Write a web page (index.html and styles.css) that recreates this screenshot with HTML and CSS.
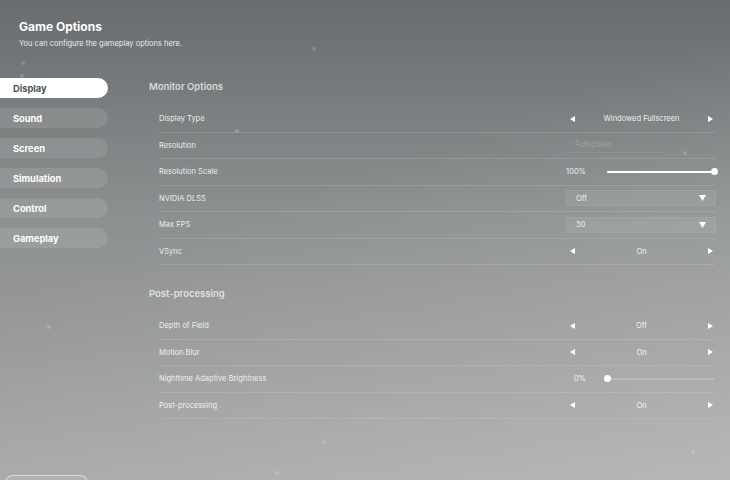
FILE: index.html
```html
<!DOCTYPE html>
<html lang="en">
<head>
    <meta charset="UTF-8">
    <meta name="viewport" content="width=device-width, initial-scale=1.0">
    <title>Game Options</title>
    <link rel="stylesheet" href="styles.css">
</head>
<body>
    <div class="options-screen">
        <!-- Decorative dust particles -->
        <span class="dust" style="left:20px;top:74px"></span>
        <span class="dust" style="left:21px;top:61px"></span>
        <span class="dust" style="left:312px;top:47px"></span>
        <span class="dust" style="left:235px;top:129px"></span>
        <span class="dust" style="left:683px;top:151px"></span>
        <span class="dust" style="left:47px;top:325px"></span>
        <span class="dust" style="left:322px;top:440px"></span>
        <span class="dust" style="left:691px;top:450px"></span>
        <span class="dust" style="left:275px;top:471px"></span>

        <div class="screen-header">
            <h1 class="screen-title">Game Options</h1>
            <p class="screen-subtitle">You can configure the gameplay options here.</p>
        </div>

        <div class="screen-body">
            <nav class="tab-list">
                <button class="tab active">Display</button>
                <button class="tab">Sound</button>
                <button class="tab">Screen</button>
                <button class="tab">Simulation</button>
                <button class="tab">Control</button>
                <button class="tab">Gameplay</button>
            </nav>

            <div class="settings">
                <section class="settings-group">
                    <h2 class="group-title">Monitor Options</h2>
                    <div class="setting-row">
                        <span class="setting-label">Display Type</span>
                        <div class="selector">
                            <svg class="arrow" viewBox="0 0 6 7"><polygon points="6,0 6,7 0,3.5"/></svg>
                            <span class="selector-value">Windowed Fullscreen</span>
                            <svg class="arrow" viewBox="0 0 6 7"><polygon points="0,0 6,3.5 0,7"/></svg>
                        </div>
                    </div>
                    <div class="setting-row">
                        <span class="setting-label">Resolution</span>
                        <div class="dropdown disabled">
                            <span>Fullscreen</span>
                        </div>
                    </div>
                    <div class="setting-row">
                        <span class="setting-label">Resolution Scale</span>
                        <div class="slider">
                            <span class="slider-value">100%</span>
                            <div class="slider-track">
                                <div class="slider-fill" style="width:100%"></div>
                                <div class="slider-knob" style="left:100%"></div>
                            </div>
                        </div>
                    </div>
                    <div class="setting-row">
                        <span class="setting-label">NVIDIA DLSS</span>
                        <div class="dropdown">
                            <span>Off</span>
                            <svg class="caret" viewBox="0 0 7 6"><polygon points="0,0 7,0 3.5,6"/></svg>
                        </div>
                    </div>
                    <div class="setting-row">
                        <span class="setting-label">Max FPS</span>
                        <div class="dropdown">
                            <span>30</span>
                            <svg class="caret" viewBox="0 0 7 6"><polygon points="0,0 7,0 3.5,6"/></svg>
                        </div>
                    </div>
                    <div class="setting-row">
                        <span class="setting-label">VSync</span>
                        <div class="selector">
                            <svg class="arrow" viewBox="0 0 6 7"><polygon points="6,0 6,7 0,3.5"/></svg>
                            <span class="selector-value">On</span>
                            <svg class="arrow" viewBox="0 0 6 7"><polygon points="0,0 6,3.5 0,7"/></svg>
                        </div>
                    </div>
                </section>

                <section class="settings-group">
                    <h2 class="group-title">Post-processing</h2>
                    <div class="setting-row">
                        <span class="setting-label">Depth of Field</span>
                        <div class="selector">
                            <svg class="arrow" viewBox="0 0 6 7"><polygon points="6,0 6,7 0,3.5"/></svg>
                            <span class="selector-value">Off</span>
                            <svg class="arrow" viewBox="0 0 6 7"><polygon points="0,0 6,3.5 0,7"/></svg>
                        </div>
                    </div>
                    <div class="setting-row">
                        <span class="setting-label">Motion Blur</span>
                        <div class="selector">
                            <svg class="arrow" viewBox="0 0 6 7"><polygon points="6,0 6,7 0,3.5"/></svg>
                            <span class="selector-value">On</span>
                            <svg class="arrow" viewBox="0 0 6 7"><polygon points="0,0 6,3.5 0,7"/></svg>
                        </div>
                    </div>
                    <div class="setting-row">
                        <span class="setting-label">Nighttime Adaptive Brightness</span>
                        <div class="slider">
                            <span class="slider-value">0%</span>
                            <div class="slider-track">
                                <div class="slider-fill" style="width:0%"></div>
                                <div class="slider-knob" style="left:0%"></div>
                            </div>
                        </div>
                    </div>
                    <div class="setting-row">
                        <span class="setting-label">Post-processing</span>
                        <div class="selector">
                            <svg class="arrow" viewBox="0 0 6 7"><polygon points="6,0 6,7 0,3.5"/></svg>
                            <span class="selector-value">On</span>
                            <svg class="arrow" viewBox="0 0 6 7"><polygon points="0,0 6,3.5 0,7"/></svg>
                        </div>
                    </div>
                </section>
            </div>
        </div>

        <div class="screen-footer">
            <button class="footer-button"></button>
        </div>
    </div>
</body>
</html>
```

FILE: styles.css
```css
* {
    margin: 0;
    padding: 0;
    box-sizing: border-box;
}

body {
    font-family: 'Inter', 'Open Sans', sans-serif;
    color: white;
    width: 730px;
    height: 480px;
    overflow: hidden;
    background: #8a8c8d;
}

.options-screen {
    position: relative;
    width: 730px;
    height: 480px;
    overflow: hidden;
    background:
        linear-gradient(160deg, rgba(255, 255, 255, 0) 40%, rgba(255, 255, 255, 0.22) 100%),
        linear-gradient(180deg, #686c6e 0%, #8d9091 45%, #a3a3a3 100%);
}

.dust {
    position: absolute;
    width: 4px;
    height: 4px;
    border-radius: 50%;
    background: rgba(255, 255, 255, 0.18);
}

.screen-header {
    padding: 19px 19px 0;
    height: 78px;
}

.screen-title {
    font-size: 12px;
    font-weight: 700;
    line-height: 16px;
}

.screen-subtitle {
    font-size: 7.5px;
    line-height: 12px;
    margin-top: 3px;
    color: rgba(255, 255, 255, 0.9);
}

.screen-body {
    display: flex;
}

.tab-list {
    width: 108px;
    display: flex;
    flex-direction: column;
    gap: 10px;
}

.tab {
    height: 20px;
    border: none;
    border-radius: 0 10px 10px 0;
    background: rgba(255, 255, 255, 0.1);
    color: white;
    font-family: inherit;
    font-size: 9.3px;
    font-weight: 700;
    text-align: left;
    padding-left: 13px;
}

.tab.active {
    background: white;
    color: #4e5254;
}

.settings {
    flex: 1;
    margin-left: 41px;
    margin-right: 14px;
    padding-top: 1px;
    display: flex;
    flex-direction: column;
    gap: 21px;
}

.group-title {
    font-size: 9.5px;
    font-weight: 600;
    line-height: 16px;
    margin-bottom: 11px;
    color: rgba(255, 255, 255, 0.72);
}

.setting-row {
    display: grid;
    grid-template-columns: 1fr 150px;
    align-items: center;
    height: 26.5px;
    margin-left: 10px;
    border-bottom: 1px solid rgba(255, 255, 255, 0.12);
}

.setting-label {
    font-size: 7.5px;
    color: rgba(255, 255, 255, 0.88);
}

.selector {
    display: flex;
    align-items: center;
    justify-content: space-between;
    padding: 0 3px 0 4px;
}

.selector-value {
    font-size: 7.5px;
    color: rgba(255, 255, 255, 0.9);
}

.arrow {
    width: 5px;
    height: 6px;
    fill: white;
}

.dropdown {
    height: 16px;
    display: flex;
    align-items: center;
    justify-content: space-between;
    padding: 0 9px 0 9px;
    background: rgba(255, 255, 255, 0.07);
    border: 1px solid rgba(255, 255, 255, 0.06);
    font-size: 7.5px;
    color: rgba(255, 255, 255, 0.9);
}

.dropdown.disabled {
    width: 96px;
    background: none;
    border: none;
    border-bottom: 1px solid rgba(255, 255, 255, 0.08);
    color: rgba(255, 255, 255, 0.25);
}

.caret {
    width: 7px;
    height: 6px;
    fill: white;
}

.slider {
    display: flex;
    align-items: center;
    gap: 21px;
    padding-right: 2px;
}

.slider-value {
    width: 20px;
    text-align: right;
    font-size: 7.5px;
    white-space: nowrap;
    color: rgba(255, 255, 255, 0.9);
}

.slider-track {
    position: relative;
    flex: 1;
    height: 2px;
    border-radius: 1px;
    background: rgba(255, 255, 255, 0.2);
}

.slider-fill {
    height: 100%;
    border-radius: 1px;
    background: white;
}

.slider-knob {
    position: absolute;
    top: 50%;
    width: 7px;
    height: 7px;
    margin: -3.5px 0 0 -3.5px;
    border-radius: 50%;
    background: white;
}

.screen-footer {
    position: absolute;
    left: 5px;
    top: 475px;
}

.footer-button {
    width: 83px;
    height: 20px;
    border: 1px solid rgba(255, 255, 255, 0.55);
    border-radius: 8px;
    background: rgba(255, 255, 255, 0.08);
}
```
